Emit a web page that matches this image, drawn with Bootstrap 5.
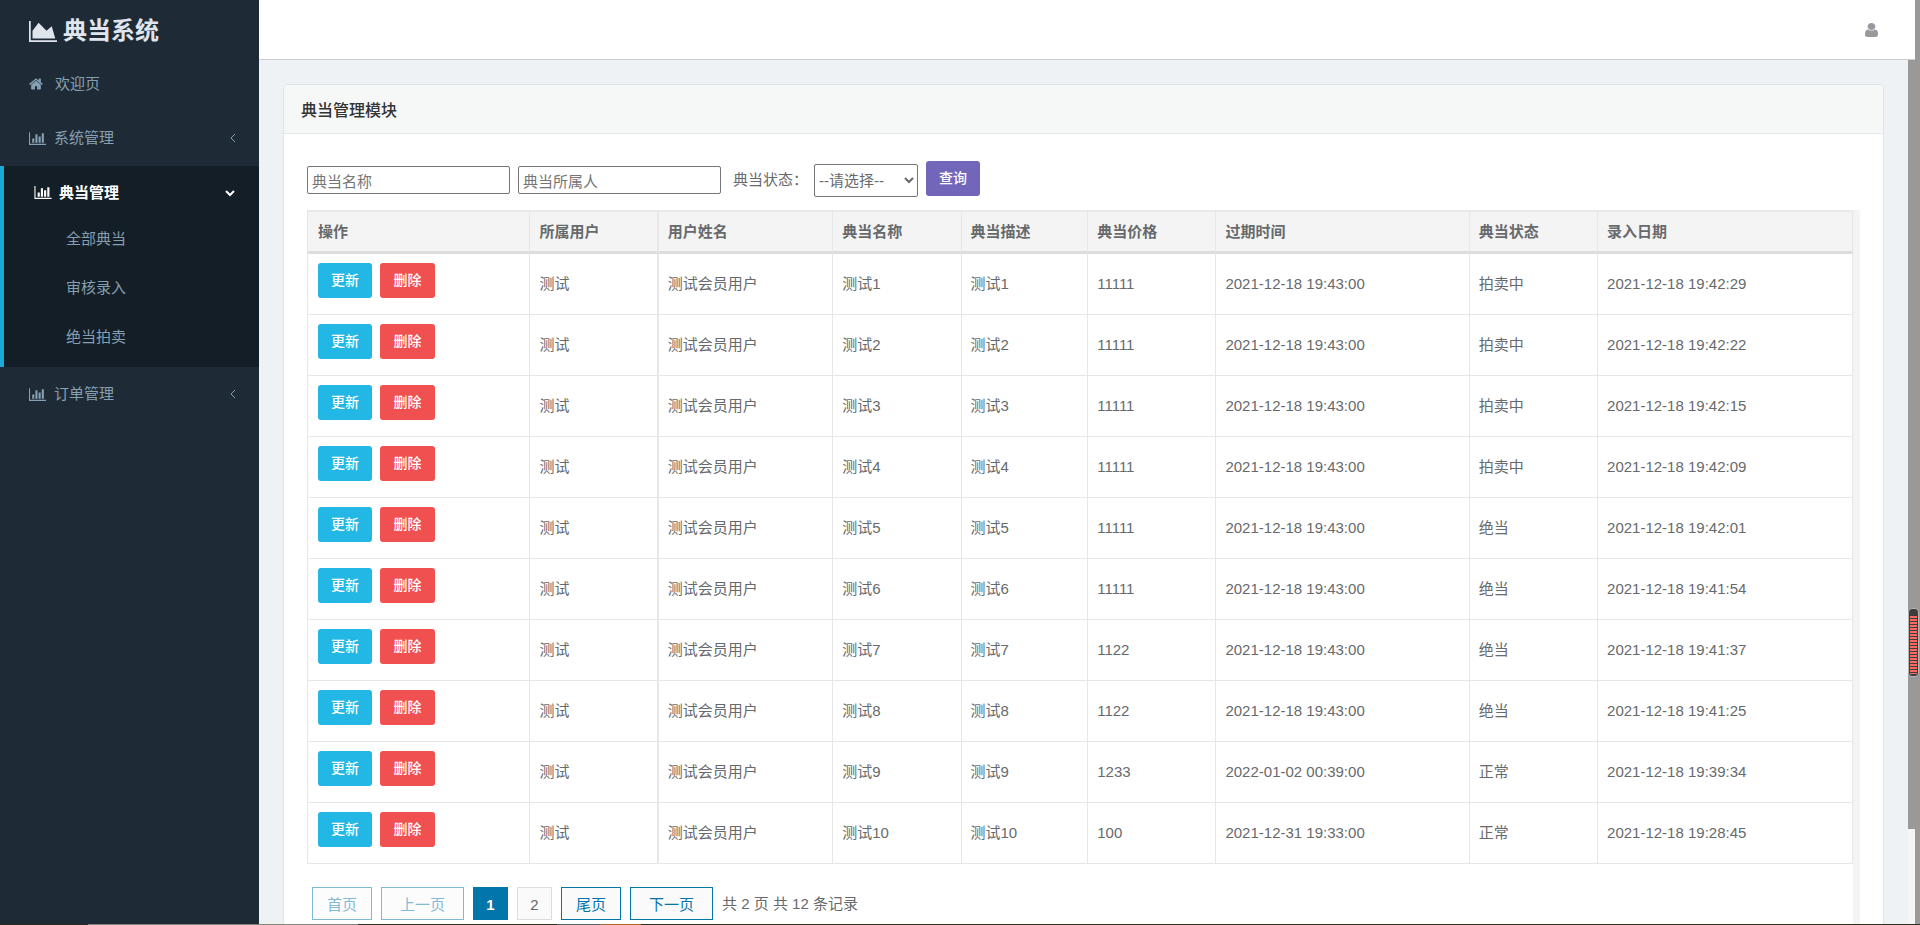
<!DOCTYPE html>
<html lang="zh-CN">
<head>
<meta charset="utf-8">
<meta name="viewport" content="width=device-width, initial-scale=1">
<title>典当系统</title>
<link rel="stylesheet" href="https://cdn.jsdelivr.net/npm/bootstrap@5.3.0/dist/css/bootstrap.min.css">
<style>
  body { font-family: "Liberation Sans", "Noto Sans CJK SC", sans-serif; font-size: 15px; line-height: 22px; color: #676a6c; background: #eef2f4; }
  svg { fill: currentColor; flex: none; }

  /* sidebar */
  .side-menu { width: 259px; background: #1e2b36; }
  .brand { height: 57px; padding: 5px 0 0 29px; gap: 6px; font-size: 24px; font-weight: 700; color: #dfe4ed; }
  .side-menu a { color: #869fb1; text-decoration: none; }
  .menu-link { height: 54px; padding: 0 23px 0 29px; gap: 8px; }
  .menu-open { margin-top: 1px; padding-bottom: 1px; background: #141e26; border-left: 4px solid #19aad8; }
  .menu-open .menu-link { color: #fff; font-weight: 700; padding-left: 30px; height: 53px; gap: 7px; }
  .sub-link { height: 49px; padding: 0 0 10px 62px; }
  .chev { fill: none; stroke: currentColor; stroke-width: 2; }
  .chev-side { stroke-width: 1; }

  /* top bar and scroll rails */
  .top-bar { height: 60px; padding-right: 37px; background: #fff; border-bottom: 1px solid #c8ced1; color: #97999c; }
  .rail-outer { width: 5px; background: #999; }
  .rail-inner { width: 7px; background: #f5f5f5; }
  .rail-thumb { height: 89%; background: #999; }
  .meter { right: 1px; top: 608px; width: 11px; height: 69px; border: 1px solid #b5b5b5; border-radius: 4px; background: #3d3d3d; padding: 7px 1px 2px; }
  .meter div { height: 100%; background: repeating-linear-gradient(#ff6b60 0 2px, #3d3d3d 2px 3px); }
  .desk-edge { height: 1px; background: linear-gradient(90deg, #2e2a1e 0 88px, #84847a 88px 358px, #2f2d1c 358px 557px, #55625f 557px 600px, #b06a2c 600px 641px, #2f2d1c 641px); }

  /* panel */
  .page-area { padding: 24px 24px 0; }
  .panel { height: 1000px; background: #fff; border: 1px solid #dee5e7; border-radius: 4px; }
  .panel-title { height: 49px; padding: 4px 17px 0; font-size: 16px; font-weight: 500; color: #333; background: #f6f8f8; border-bottom: 1px solid #e6e9ea; border-radius: 4px 4px 0 0; }
  .panel-main { padding: 27px 23px 0 23px; }
  .filters { height: 38px; margin-bottom: 11px; }
  .filters input { width: 203px; height: 28px; padding: 2px 4px 0; border: 1px solid #767676; border-radius: 2px; }
  .filters input::placeholder { color: #757575; }
  .filters select { width: 104px; height: 33px; padding: 0; margin-left: 6px; border: 1px solid #767676; border-radius: 2px; background: #fff; color: #676a6c; }
  .act { height: 35px; width: 54px; padding: 0 0 2px; border: 0; border-radius: 3px; font-size: 14px; font-weight: 500; color: #fff; }
  .act-find { background: #7266ba; }
  .act-edit { background: #23b7e5; }
  .act-del { width: 55px; background: #f05050; }

  /* records */
  .records { border-right: 7px solid #f4f4f4; height: 800px; }
  .records table { table-layout: fixed; width: 100%; border-collapse: separate; border-spacing: 0; border-left: 1px solid #e7e7e7; }
  .records th { height: 44px; padding: 0 9px; background: #f4f4f4; border-top: 2px solid #e7ebee; border-bottom: 3px solid #ddd; border-right: 1px solid #e7e7e7; font-weight: 700; }
  .records td { height: 61px; padding: 0 9px; border-right: 1px solid #e7e7e7; border-bottom: 1px solid #e7e7e7; vertical-align: middle; }
  .records tr > :nth-child(2) { border-right-width: 2px; }
  .records tr > :first-child { padding-left: 10px; }
  .records .btn-pair { padding-bottom: 7px; }

  /* pager */
  .pager { padding: 23px 0 0 5px; gap: 9px; }
  .pager a { height: 33px; min-width: 35px; line-height: 33px; border: 1px solid #0275ab; padding: 0 14px; color: #0275ab; background: #fafafa; text-decoration: none; text-align: center; }
  .pager a.wide { padding: 0 18px; }
  .pager a.off { opacity: .5; }
  .pager a.num { padding: 0; border-color: #ddd; color: #666; }
  .pager a.now { border-color: #0275ab; background: #0275ab; color: #fff; font-weight: 700; }
</style>
</head>
<body>
<svg class="d-none" aria-hidden="true">
  <symbol id="bars" viewBox="0 0 2048 1792"><path d="M640 896v512h-256v-512h256zm384-512v1024h-256v-1024h256zm1024 1152v128h-2048v-1536h128v1408h1920zm-640-896v768h-256v-768h256zm384-384v1152h-256v-1152h256z"/></symbol>
</svg>
<div class="vh-100 d-flex flex-column overflow-hidden position-relative">
  <div class="d-flex flex-grow-1 overflow-hidden">
    <nav class="side-menu flex-shrink-0">
      <div class="brand d-flex align-items-center">
        <svg width="28" height="25" viewBox="0 0 2048 1792"><path d="M2048 1536v128h-2048v-1536h128v1408h1920zm-384-1024l256 896h-1664v-576l448-576 576 576z"/></svg>
        <span>典当系统</span>
      </div>
      <a class="menu-link d-flex align-items-center" href="#"><svg class="me-1" width="14" height="14" viewBox="64 128 1664 1536"><path d="M1472 992v480q0 26-19 45t-45 19h-384v-384h-256v384h-384q-26 0-45-19t-19-45v-480q0-1 .5-3t.5-3l575-474 575 474q1 2 1 6zm223-69l-62 74q-8 9-21 11h-3q-13 0-21-7l-692-577-692 577q-12 8-24 7-13-2-21-11l-62-74q-8-10-7-23.500t11-21.500l719-599q32-26 76-26t76 26l244 204v-195q0-14 9-23t23-9h192q14 0 23 9t9 23v408l219 182q10 8 11 21.500t-7 23.500z"/></svg><span>欢迎页</span></a>
      <a class="menu-link d-flex align-items-center" href="#"><svg width="17" height="15"><use href="#bars"/></svg><span>系统管理</span><svg class="chev chev-side ms-auto" width="7" height="10" viewBox="0 0 7 10"><path d="M6 1L2 5l4 4"/></svg></a>
      <div class="menu-open">
        <a class="menu-link d-flex align-items-center" href="#"><svg width="18" height="15"><use href="#bars"/></svg><span>典当管理</span><svg class="chev ms-auto" width="11" height="8" viewBox="0 0 11 8"><path d="M1 2l4 4 4-4"/></svg></a>
        <a class="sub-link d-flex align-items-center" href="#">全部典当</a>
        <a class="sub-link d-flex align-items-center" href="#">审核录入</a>
        <a class="sub-link d-flex align-items-center" href="#">绝当拍卖</a>
      </div>
      <a class="menu-link d-flex align-items-center" href="#"><svg width="17" height="15"><use href="#bars"/></svg><span>订单管理</span><svg class="chev chev-side ms-auto" width="7" height="10" viewBox="0 0 7 10"><path d="M6 1L2 5l4 4"/></svg></a>
    </nav>

    <div class="d-flex flex-column flex-grow-1 overflow-hidden">
      <header class="top-bar d-flex align-items-center justify-content-end flex-shrink-0">
        <svg width="13" height="14" viewBox="256 128 1280 1536" preserveAspectRatio="none"><path d="M1536 1399q0 109-62.500 187t-150.500 78h-854q-88 0-150.500-78t-62.500-187q0-85 8.500-160.500t31.500-152 58.500-131 94-89 134.500-34.500q131 128 313 128t313-128q76 0 134.500 34.500t94 89 58.500 131 31.500 152 8.500 160.500zm-256-887q0 159-112.500 271.500t-271.500 112.500-271.500-112.500-112.500-271.500 112.500-271.500 271.500-112.500 271.500 112.500 112.500 271.500z"/></svg>
      </header>
      <div class="d-flex flex-grow-1 overflow-hidden">
        <main class="page-area flex-grow-1 overflow-hidden">
          <section class="panel">
            <h1 class="panel-title d-flex align-items-center m-0">典当管理模块</h1>
            <div class="panel-main">
              <form class="filters d-flex align-items-center">
                <input class="me-2" type="text" placeholder="典当名称" aria-label="典当名称">
                <input type="text" placeholder="典当所属人" aria-label="典当所属人">
                <label class="ms-2 ps-1" for="state">典当状态：</label>
                <select id="state"><option>--请选择--</option></select>
                <button class="act act-find ms-2 align-self-start" type="button">查询</button>
              </form>
              <div class="records">
                <table>
                  <colgroup><col style="width:14.4%"><col style="width:8.3%"><col style="width:11.3%"><col style="width:8.3%"><col style="width:8.2%"><col style="width:8.3%"><col style="width:16.4%"><col style="width:8.3%"><col style="width:16.5%"></colgroup>
                  <thead>
                    <tr><th>操作</th><th>所属用户</th><th>用户姓名</th><th>典当名称</th><th>典当描述</th><th>典当价格</th><th>过期时间</th><th>典当状态</th><th>录入日期</th></tr>
                  </thead>
                  <tbody>
                    <tr><td class="btn-pair"><button class="act act-edit me-2" type="button">更新</button><button class="act act-del" type="button">删除</button></td><td>测试</td><td>测试会员用户</td><td>测试1</td><td>测试1</td><td>11111</td><td>2021-12-18 19:43:00</td><td>拍卖中</td><td>2021-12-18 19:42:29</td></tr>
                    <tr><td class="btn-pair"><button class="act act-edit me-2" type="button">更新</button><button class="act act-del" type="button">删除</button></td><td>测试</td><td>测试会员用户</td><td>测试2</td><td>测试2</td><td>11111</td><td>2021-12-18 19:43:00</td><td>拍卖中</td><td>2021-12-18 19:42:22</td></tr>
                    <tr><td class="btn-pair"><button class="act act-edit me-2" type="button">更新</button><button class="act act-del" type="button">删除</button></td><td>测试</td><td>测试会员用户</td><td>测试3</td><td>测试3</td><td>11111</td><td>2021-12-18 19:43:00</td><td>拍卖中</td><td>2021-12-18 19:42:15</td></tr>
                    <tr><td class="btn-pair"><button class="act act-edit me-2" type="button">更新</button><button class="act act-del" type="button">删除</button></td><td>测试</td><td>测试会员用户</td><td>测试4</td><td>测试4</td><td>11111</td><td>2021-12-18 19:43:00</td><td>拍卖中</td><td>2021-12-18 19:42:09</td></tr>
                    <tr><td class="btn-pair"><button class="act act-edit me-2" type="button">更新</button><button class="act act-del" type="button">删除</button></td><td>测试</td><td>测试会员用户</td><td>测试5</td><td>测试5</td><td>11111</td><td>2021-12-18 19:43:00</td><td>绝当</td><td>2021-12-18 19:42:01</td></tr>
                    <tr><td class="btn-pair"><button class="act act-edit me-2" type="button">更新</button><button class="act act-del" type="button">删除</button></td><td>测试</td><td>测试会员用户</td><td>测试6</td><td>测试6</td><td>11111</td><td>2021-12-18 19:43:00</td><td>绝当</td><td>2021-12-18 19:41:54</td></tr>
                    <tr><td class="btn-pair"><button class="act act-edit me-2" type="button">更新</button><button class="act act-del" type="button">删除</button></td><td>测试</td><td>测试会员用户</td><td>测试7</td><td>测试7</td><td>1122</td><td>2021-12-18 19:43:00</td><td>绝当</td><td>2021-12-18 19:41:37</td></tr>
                    <tr><td class="btn-pair"><button class="act act-edit me-2" type="button">更新</button><button class="act act-del" type="button">删除</button></td><td>测试</td><td>测试会员用户</td><td>测试8</td><td>测试8</td><td>1122</td><td>2021-12-18 19:43:00</td><td>绝当</td><td>2021-12-18 19:41:25</td></tr>
                    <tr><td class="btn-pair"><button class="act act-edit me-2" type="button">更新</button><button class="act act-del" type="button">删除</button></td><td>测试</td><td>测试会员用户</td><td>测试9</td><td>测试9</td><td>1233</td><td>2022-01-02 00:39:00</td><td>正常</td><td>2021-12-18 19:39:34</td></tr>
                    <tr><td class="btn-pair"><button class="act act-edit me-2" type="button">更新</button><button class="act act-del" type="button">删除</button></td><td>测试</td><td>测试会员用户</td><td>测试10</td><td>测试10</td><td>100</td><td>2021-12-31 19:33:00</td><td>正常</td><td>2021-12-18 19:28:45</td></tr>
                  </tbody>
                </table>
                <div class="pager d-flex align-items-center">
                  <a class="off" href="#">首页</a>
                  <a class="wide off" href="#">上一页</a>
                  <a class="num now" href="#">1</a>
                  <a class="num" href="#">2</a>
                  <a href="#">尾页</a>
                  <a class="wide" href="#">下一页</a>
                  <span>共 2 页 共 12 条记录</span>
                </div>
              </div>
            </div>
          </section>
        </main>
        <div class="rail-inner flex-shrink-0"><div class="rail-thumb"></div></div>
      </div>
    </div>
    <div class="rail-outer flex-shrink-0"></div>
  </div>
  <div class="desk-edge flex-shrink-0"></div>
  <div class="meter position-absolute"><div></div></div>
</div>
<script src="https://cdn.jsdelivr.net/npm/bootstrap@5.3.0/dist/js/bootstrap.bundle.min.js"></script>
</body>
</html>
